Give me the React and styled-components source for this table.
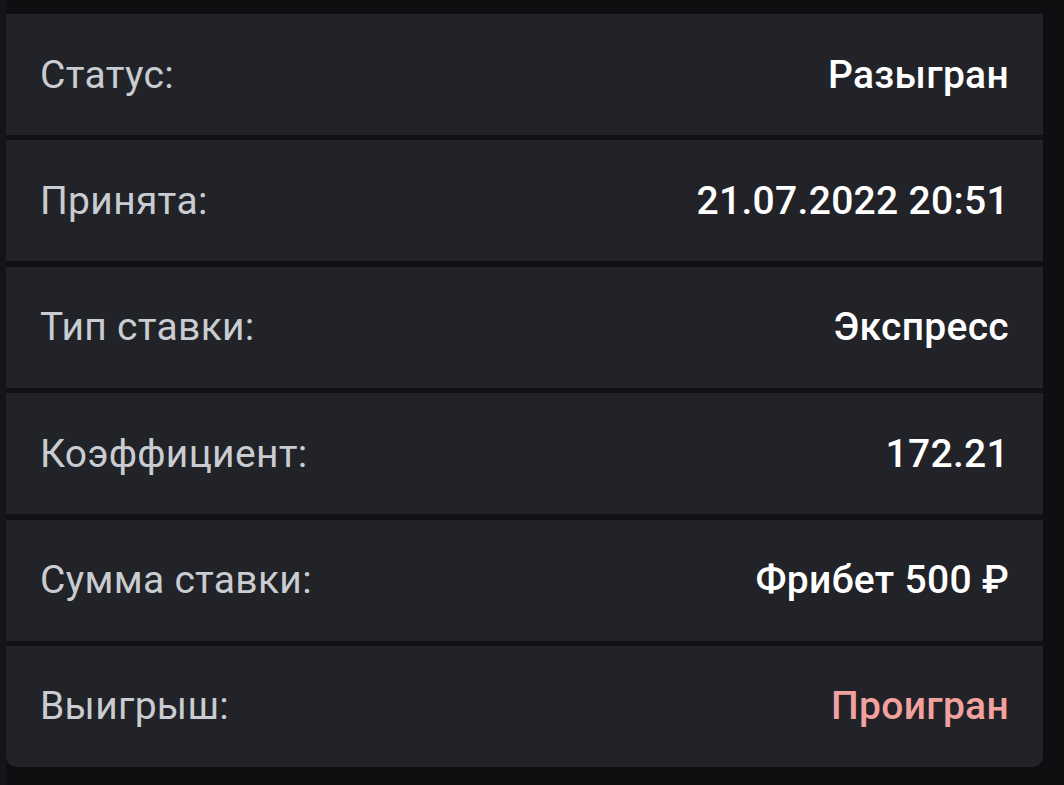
import React from 'react'
import styled, { createGlobalStyle } from 'styled-components'

const GlobalStyle = createGlobalStyle`
  html, body {
    margin: 0;
    padding: 0;
    background: #0e0f11;
  }
  body {
    font-family: Roboto, "Noto Sans", sans-serif;
  }
`

const Page = styled.div`
  width: 1064px;
  height: 785px;
  box-sizing: border-box;
  padding: 14px 21px 0 6px;
  background: linear-gradient(to right, #141518 0, #141518 6px, #0e0f11 6px);
`

const Card = styled.div`
  display: flex;
  flex-direction: column;
  gap: 5.4px;
  background: #111215;
  border-radius: 0 0 10px 10px;
  overflow: hidden;
`

const Row = styled.div`
  display: flex;
  align-items: center;
  justify-content: space-between;
  height: 121px;
  padding: 0 34px 0 34px;
  background: #212328;
  border-radius: ${p => (p.last ? '0 0 10px 10px' : '0')};
`

const Label = styled.span`
  font-size: 39px;
  font-weight: 400;
  color: #c9ccd1;
  letter-spacing: 0.3px;
`

const Value = styled.span`
  font-size: 39px;
  font-weight: 500;
  color: ${p => (p.lost ? '#f2a19f' : '#ffffff')};
  letter-spacing: 0.3px;
`

const rows = [
  { label: 'Статус:', value: 'Разыгран' },
  { label: 'Принята:', value: '21.07.2022 20:51' },
  { label: 'Тип ставки:', value: 'Экспресс' },
  { label: 'Коэффициент:', value: '172.21' },
  { label: 'Сумма ставки:', value: 'Фрибет 500 ₽' },
  { label: 'Выигрыш:', value: 'Проигран', lost: true }
]

const App = () => {
  return (
    <Page>
      <GlobalStyle />
      <Card>
        {rows.map((r, i) => (
          <Row key={r.label} last={i === rows.length - 1}>
            <Label>{r.label}</Label>
            <Value lost={r.lost}>{r.value}</Value>
          </Row>
        ))}
      </Card>
    </Page>
  )
}

export default App
